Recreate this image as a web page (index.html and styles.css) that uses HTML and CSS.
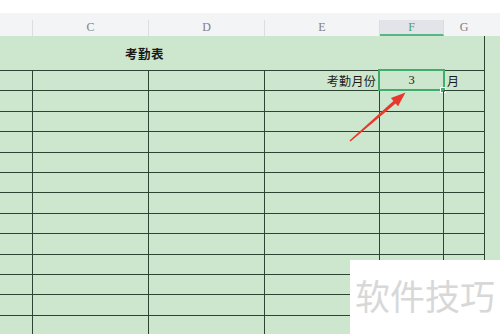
FILE: index.html
```html
<!DOCTYPE html>
<html lang="zh">
<head>
<meta charset="utf-8">
<link rel="stylesheet" href="styles.css">
</head>
<body>
<div class="page">
  <div class="topbar"></div>
  <div class="colhead">
    <div class="h c-a"></div>
    <div class="h c-c">C</div>
    <div class="h c-d">D</div>
    <div class="h c-e">E</div>
    <div class="h c-f sel">F</div>
    <div class="h c-g nosep">G</div>
  </div>
  <div class="sheet">
    <div class="title-row"><span class="title">考勤表</span></div>
    <div class="row">
      <div class="cell c-a"></div><div class="cell c-c"></div><div class="cell c-d"></div>
      <div class="cell c-e right">考勤月份</div>
      <div class="cell c-f center active">3<span class="selbox"></span><span class="handle"></span></div>
      <div class="cell c-g left">月</div>
    </div>
    <div class="row"><div class="cell c-a"></div><div class="cell c-c"></div><div class="cell c-d"></div><div class="cell c-e"></div><div class="cell c-f"></div><div class="cell c-g"></div></div>
    <div class="row"><div class="cell c-a"></div><div class="cell c-c"></div><div class="cell c-d"></div><div class="cell c-e"></div><div class="cell c-f"></div><div class="cell c-g"></div></div>
    <div class="row"><div class="cell c-a"></div><div class="cell c-c"></div><div class="cell c-d"></div><div class="cell c-e"></div><div class="cell c-f"></div><div class="cell c-g"></div></div>
    <div class="row"><div class="cell c-a"></div><div class="cell c-c"></div><div class="cell c-d"></div><div class="cell c-e"></div><div class="cell c-f"></div><div class="cell c-g"></div></div>
    <div class="row"><div class="cell c-a"></div><div class="cell c-c"></div><div class="cell c-d"></div><div class="cell c-e"></div><div class="cell c-f"></div><div class="cell c-g"></div></div>
    <div class="row"><div class="cell c-a"></div><div class="cell c-c"></div><div class="cell c-d"></div><div class="cell c-e"></div><div class="cell c-f"></div><div class="cell c-g"></div></div>
    <div class="row"><div class="cell c-a"></div><div class="cell c-c"></div><div class="cell c-d"></div><div class="cell c-e"></div><div class="cell c-f"></div><div class="cell c-g"></div></div>
    <div class="row"><div class="cell c-a"></div><div class="cell c-c"></div><div class="cell c-d"></div><div class="cell c-e"></div><div class="cell c-f"></div><div class="cell c-g"></div></div>
    <div class="row"><div class="cell c-a"></div><div class="cell c-c"></div><div class="cell c-d"></div><div class="cell c-e"></div><div class="cell c-f"></div><div class="cell c-g"></div></div>
    <div class="row"><div class="cell c-a"></div><div class="cell c-c"></div><div class="cell c-d"></div><div class="cell c-e"></div><div class="cell c-f"></div><div class="cell c-g"></div></div>
    <div class="row"><div class="cell c-a"></div><div class="cell c-c"></div><div class="cell c-d"></div><div class="cell c-e"></div><div class="cell c-f"></div><div class="cell c-g"></div></div>
    <div class="row"><div class="cell c-a"></div><div class="cell c-c"></div><div class="cell c-d"></div><div class="cell c-e"></div><div class="cell c-f"></div><div class="cell c-g"></div></div>
  </div>
  <svg class="arrow" width="500" height="334" viewBox="0 0 500 334">
    <polygon fill="#e8382b" points="349.5,140.5 393.4,101.0 390.9,98.1 405.5,92.6 398.1,106.3 395.6,103.4 350.5,141.5"/>
  </svg>
  <div class="watermark">软件技巧</div>
</div>
</body>
</html>
```
FILE: styles.css
```css
html, body {
  margin: 0;
  padding: 0;
  background: #ffffff;
}
.page {
  position: relative;
  width: 500px;
  height: 334px;
  overflow: hidden;
  font-family: "Noto Sans CJK SC", "Liberation Sans", sans-serif;
  background: #cde7cf;
}
.topbar {
  height: 13px;
  background: #ffffff;
}
.colhead {
  display: flex;
  height: 23px;
  background: #f3f4f6;
  align-items: flex-end;
}
.h {
  box-sizing: border-box;
  height: 16px;
  border-right: 1px solid #dcdde0;
  font-family: "Liberation Serif", "DejaVu Serif", serif;
  font-size: 12px;
  line-height: 14px;
  color: #808080;
  text-align: center;
}
.h.nosep { border-right-color: transparent; }
.h.sel {
  background: #e2e4e9;
  border-bottom: 2px solid #55b784;
  color: #4f9d77;
}
.c-a { width: 33px; }
.c-c { width: 116px; }
.c-d { width: 116px; }
.c-e { width: 115px; }
.c-f { width: 64px; }
.c-g { width: 41px; }
.sheet {
  width: 485px;
}
.title-row {
  box-sizing: border-box;
  height: 35px;
  border-bottom: 1px solid #2e4433;
  border-right: 1px solid #2e4433;
  display: flex;
  align-items: center;
  padding-left: 125px;
}
.title {
  font-size: 12.5px;
  font-weight: bold;
  color: #1a1a1a;
  letter-spacing: 0.5px;
}
.row {
  display: flex;
  height: 20.4px;
}
.cell {
  position: relative;
  box-sizing: border-box;
  height: 100%;
  border-right: 1px solid #2e4433;
  border-bottom: 1px solid #2e4433;
  font-size: 12px;
  color: #1a1a1a;
  display: flex;
  align-items: center;
}
.cell.right { justify-content: flex-end; padding-right: 3px; letter-spacing: 0.3px; }
.cell.center { justify-content: center; font-family: "Liberation Serif", serif; font-size: 12.5px; }
.cell.left { padding-left: 3px; }
.selbox {
  position: absolute;
  left: -2px;
  top: -2px;
  right: -2px;
  bottom: -1px;
  border: 2px solid #3fae6c;
}
.handle {
  position: absolute;
  right: -3px;
  bottom: -3px;
  width: 4px;
  height: 4px;
  background: #3fae6c;
  border: 1px solid #ffffff;
}
.arrow {
  position: absolute;
  left: 0;
  top: 0;
}
.watermark {
  position: absolute;
  left: 350px;
  top: 260px;
  width: 150px;
  height: 74px;
  background: #ffffff;
  color: #d8d8d8;
  font-size: 35px;
  line-height: 36px;
  padding: 17px 0 0 5px;
  box-sizing: border-box;
  white-space: nowrap;
}
```
